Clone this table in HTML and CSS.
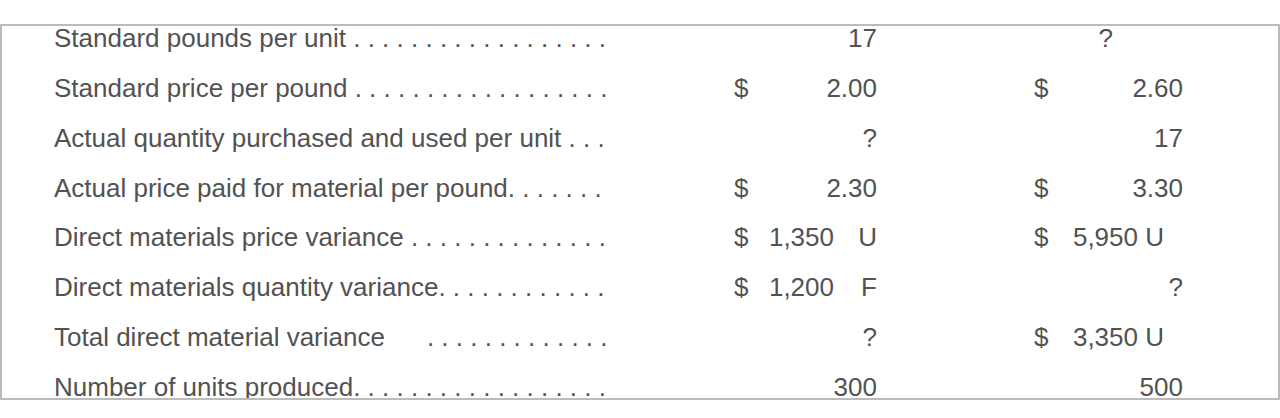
FILE: index.html
```html
<!DOCTYPE html>
<html lang="en">
<head>
<meta charset="utf-8">
<title>Direct materials variances</title>
<link rel="stylesheet" href="styles.css">
</head>
<body>
<div class="frame">
  <div class="sheet">
    <div class="row">
      <div class="label">Standard pounds per unit . . . . . . . . . . . . . . . . . .</div>
      <div class="c1 amt"><span class="num">17</span></div>
      <div class="c2 amt mid"><span class="num">?</span></div>
    </div>
    <div class="row">
      <div class="label">Standard price per pound . . . . . . . . . . . . . . . . . .</div>
      <div class="c1 amt"><span class="cur">$</span><span class="num">2.00</span></div>
      <div class="c2 amt"><span class="cur">$</span><span class="num">2.60</span></div>
    </div>
    <div class="row">
      <div class="label">Actual quantity purchased and used per unit . . .</div>
      <div class="c1 amt"><span class="num">?</span></div>
      <div class="c2 amt"><span class="num">17</span></div>
    </div>
    <div class="row">
      <div class="label">Actual price paid for material per pound. . . . . . .</div>
      <div class="c1 amt"><span class="cur">$</span><span class="num">2.30</span></div>
      <div class="c2 amt"><span class="cur">$</span><span class="num">3.30</span></div>
    </div>
    <div class="row">
      <div class="label">Direct materials price variance . . . . . . . . . . . . . .</div>
      <div class="c1 amt"><span class="cur">$</span><span class="num">1,350</span><span class="flag">U</span></div>
      <div class="c2 amt"><span class="cur">$</span><span class="num tail">5,950 U</span></div>
    </div>
    <div class="row">
      <div class="label">Direct materials quantity variance. . . . . . . . . . . .</div>
      <div class="c1 amt"><span class="cur">$</span><span class="num">1,200</span><span class="flag">F</span></div>
      <div class="c2 amt"><span class="num">?</span></div>
    </div>
    <div class="row">
      <div class="label">Total direct material variance<span class="lead">. . . . . . . . . . . . .</span></div>
      <div class="c1 amt"><span class="num">?</span></div>
      <div class="c2 amt"><span class="cur">$</span><span class="num tail">3,350 U</span></div>
    </div>
    <div class="row">
      <div class="label">Number of units produced. . . . . . . . . . . . . . . . . .</div>
      <div class="c1 amt"><span class="num">300</span></div>
      <div class="c2 amt"><span class="num">500</span></div>
    </div>
  </div>
</div>
</body>
</html>
```

FILE: styles.css
```css
html, body {
  margin: 0;
  padding: 0;
  background: #ffffff;
}

body {
  font-family: "Liberation Sans", Arial, Helvetica, sans-serif;
  font-size: 26px;
  color: #525252;
}

.frame {
  margin-top: 24px;
  height: 376px;
  box-sizing: border-box;
  border: 2px solid #bbbbbb;
  overflow: hidden;
}

.sheet {
  margin-top: -13px;
  padding-left: 52px;
}

.row {
  display: grid;
  grid-template-columns: 680px 143px 306px;
  height: 49.85px;
  line-height: 50px;
  white-space: nowrap;
}

.label {
  overflow: hidden;
}

.lead {
  margin-left: 42px;
}

.amt {
  display: flex;
  align-items: baseline;
}

.c2 {
  padding-left: 157px;
}

.cur {
  flex: 0 0 auto;
}

.num {
  margin-left: auto;
}

.flag {
  width: 43px;
  text-align: right;
}

.tail {
  padding-right: 19px;
}

.mid .num {
  padding-right: 70px;
}
```
